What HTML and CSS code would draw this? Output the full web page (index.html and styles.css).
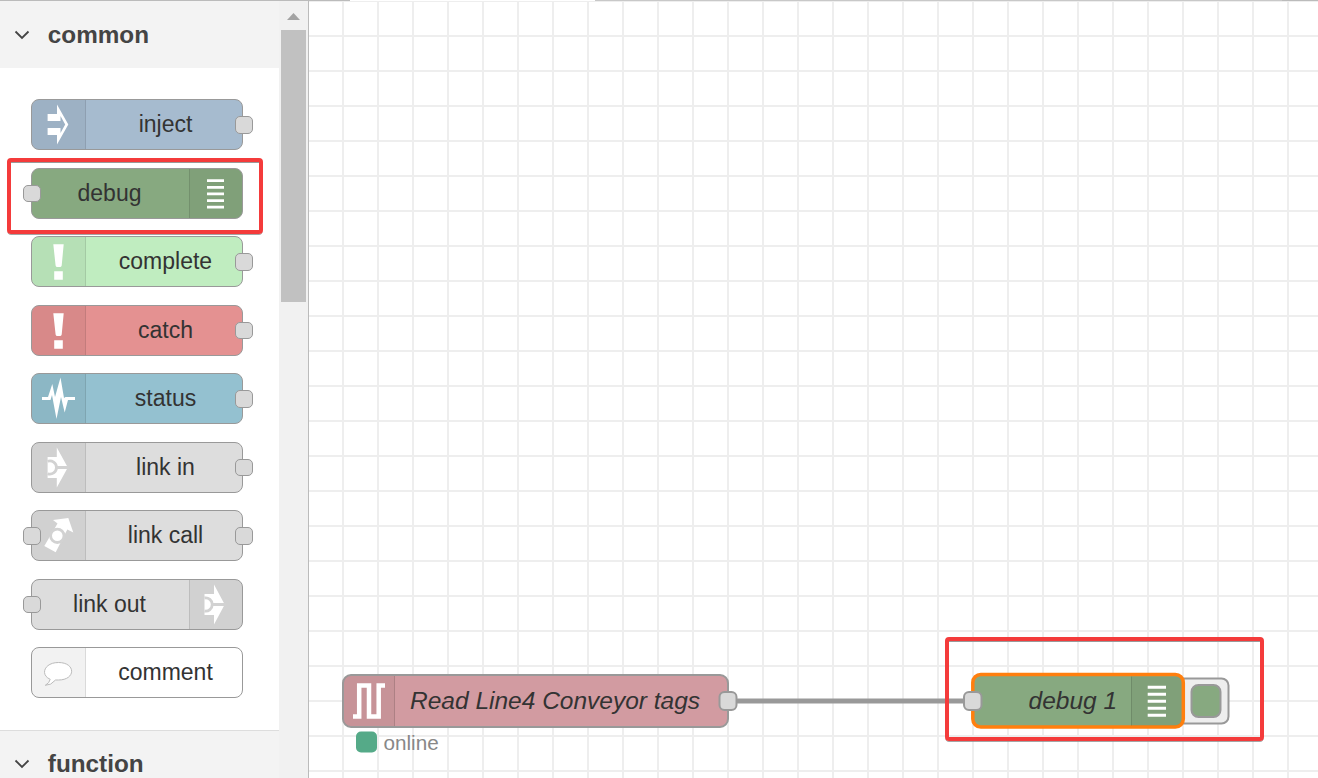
FILE: index.html
```html
<!DOCTYPE html>
<html lang="en">
<head>
<meta charset="utf-8">
<title>Flow editor</title>
<link rel="stylesheet" href="styles.css">
</head>
<body>
<div class="editor">
  <aside class="palette">
    <div class="palette-content">
      <header class="category">
        <svg class="chevron" viewBox="0 0 16 10"><path d="M1.5 1.5 8 8l6.500-6.500"/></svg>
        <h2>common</h2>
      </header>
      <div class="nodes">
        <div class="slot"><div class="node inject"><span class="icon"><svg viewBox="0 0 54 51"><path fill-rule="evenodd" d="M16.600 15H26V5.500L37.300 25.500 26 45.500V36H16.600V29H29.500V34L34.200 25.500 29.500 17V22H16.600Z"/></svg></span><span class="label">inject</span><i class="port out"></i></div></div>
        <div class="slot"><div class="node debug end"><span class="icon"><svg viewBox="0 0 54 51"><path d="M18 11.200h17v2.700H18zM18 18h17v2.700H18zM18 24.500h17v2.700H18zM18 31.200h17v2.700H18zM18 37.800h17v2.700H18z"/></svg></span><span class="label">debug</span><i class="port in short"></i></div></div>
        <div class="slot"><div class="node complete"><span class="icon"><svg viewBox="0 0 54 51"><path d="M22.300 8.300H32.700L30.700 29.500Q30.300 31 29 31H26.300Q24.900 31 24.600 29.500ZM23.200 35.200h8.600v8.500h-8.600z"/></svg></span><span class="label">complete</span><i class="port out"></i></div></div>
        <div class="slot"><div class="node catch"><span class="icon"><svg viewBox="0 0 54 51"><path d="M22.300 8.300H32.700L30.700 29.500Q30.300 31 29 31H26.300Q24.900 31 24.600 29.500ZM23.200 35.200h8.600v8.500h-8.600z"/></svg></span><span class="label">catch</span><i class="port out short"></i></div></div>
        <div class="slot"><div class="node status"><span class="icon"><svg viewBox="0 0 54 51"><path d="M11 24H17L21.300 11 24 24 29.500 4.500 33 25 34.500 24H44V27H37L33.700 39.500 30 24 25.500 46 21 22 19.500 27H11Z"/></svg></span><span class="label">status</span><i class="port out"></i></div></div>
        <div class="slot"><div class="node link"><span class="icon"><svg viewBox="0 0 54 51"><path d="M16.600 15H25.800V5.500L36.800 25.500 25.800 45.500V36H16.600Z"/><path class="ring" d="M16.600 19.300a6.600 6.600 0 1 1 0 12.400M25 25.500H38"/></svg></span><span class="label">link in</span><i class="port out short"></i></div></div>
        <div class="slot"><div class="node link"><span class="icon"><svg viewBox="0 0 54 51"><path d="M13.300 36 24.700 42.200 36.300 19.500 42.300 22.500 37.300 8 22 10 26.500 13.500Z"/><circle class="ring" cx="26.300" cy="25.800" r="6.700"/></svg></span><span class="label">link call</span><i class="port in"></i><i class="port out"></i></div></div>
        <div class="slot"><div class="node link end"><span class="icon"><svg viewBox="0 0 54 51"><path d="M15.500 15H25V5.500L35.700 25.500 25 45.500V36H15.500Z"/><path class="ring" d="M15.500 19a6.600 6.600 0 1 1 0 13M23.500 25.500H37"/></svg></span><span class="label">link out</span><i class="port in short"></i></div></div>
        <div class="slot"><div class="node comment"><span class="icon"><svg viewBox="0 0 54 51"><path class="bubble" d="M14.300 38.300Q18.500 36 19.200 32.300C9 28 13 15.500 27.500 15.500 45 15.500 45 33 27.500 33H24.500Q20 38.500 14.300 38.300Z"/></svg></span><span class="label">comment</span></div></div>
      </div>
      <header class="category second">
        <svg class="chevron" viewBox="0 0 16 10"><path d="M1.500 1.500 8 8l6.500-6.500"/></svg>
        <h2>function</h2>
      </header>
    </div>
    <div class="scrollbar">
      <svg class="arrow" viewBox="0 0 13 7"><path d="M0 7 6.500 0 13 7z"/></svg>
      <div class="thumb"></div>
    </div>
  </aside>
  <main class="workspace">
    <svg class="flow" viewBox="309 0 1009 778">
      <path class="wire" d="M728 701H973"/>
      <g>
        <rect class="body tags" x="343" y="675" width="385" height="52" rx="8"/>
        <path class="shade" d="M395 676V726H351Q344 726 344 719V683Q344 676 351 676Z"/>
        <path class="divider" d="M394.500 676V726"/>
        <path class="square-wave" d="M353 716.500H359.200V685.500H369V716.500H378.700V685.500H385"/>
        <text class="name" x="410" y="708.700">Read Line4 Conveyor tags</text>
        <rect class="plug" x="719.500" y="692" width="17" height="18" rx="5"/>
        <rect class="online" x="356" y="731.500" width="21" height="21" rx="5"/>
        <text class="state" x="383.500" y="750">online</text>
      </g>
      <g>
        <rect class="button" x="1170" y="678.500" width="58.500" height="45" rx="7"/>
        <rect class="toggle" x="1191.500" y="685" width="29" height="32" rx="7"/>
        <rect class="body selected" x="972.800" y="674.500" width="210.500" height="52.500" rx="8"/>
        <path class="shade" d="M1131 676.500H1176Q1181.500 676.500 1181.500 683V719Q1181.500 725.500 1176 725.500H1131Z"/>
        <path class="divider" d="M1131.500 676.500V725.500"/>
        <path class="bars" d="M1147.700 687.300h18.300M1147.700 694.300h18.300M1147.700 701.300h18.300M1147.700 708.300h18.300M1147.700 715.300h18.300"/>
        <text class="name" x="1028.500" y="708.700">debug 1</text>
        <rect class="plug" x="964" y="692" width="17.500" height="18" rx="5"/>
      </g>
    </svg>
  </main>
  <div class="tab-edge"></div>
  <div class="callout callout-palette"></div>
  <div class="callout callout-flow"></div>
</div>
</body>
</html>
```
FILE: styles.css
```css
* { box-sizing: border-box; }
body { margin: 0; font-family: "Liberation Sans", Arial, sans-serif; }
.editor { position: relative; display: flex; width: 1318px; height: 778px; overflow: hidden; background: #fff; }

.palette { display: flex; width: 309px; height: 778px; border-right: 1px solid #bbb; overflow: hidden; }
.palette-content { width: 279px; flex: none; }
.category { display: flex; align-items: center; gap: 17.500px; height: 68px; padding: 1px 0 0 14.300px; background: #f3f3f3; }
.category.second { height: 67px; border-top: 1px solid #ddd; }
.category.second { padding-top: 0; }
.category h2 { margin: 0; font-size: 24.300px; line-height: 28px; color: #444; }
.chevron { width: 16px; height: 10px; fill: none; stroke: #444; stroke-width: 1.800; }

.nodes { height: 662px; padding: 31.400px 0 0 31px; }
.slot { height: 68.500px; }
.node { position: relative; display: flex; width: 212px; height: 51px; border: 1px solid #999; border-radius: 8px; color: #333; }
.node.end { flex-direction: row-reverse; }
.icon { width: 54px; flex: none; background: rgba(0, 0, 0, .05); border-right: 1px solid rgba(0, 0, 0, .1); border-radius: 7px 0 0 7px; }
.end .icon { width: 53px; border-right: 0; border-left: 1px solid rgba(0, 0, 0, .1); border-radius: 0 7px 7px 0; }
.icon svg { display: block; width: 54px; height: 51px; margin: -1px 0 0 -1px; fill: #fff; }
.label { flex: 1; padding-left: 3px; font-size: 23px; line-height: 48px; text-align: center; }
.end .label { padding: 0 2px 0 0; }
.port { position: absolute; top: 16px; width: 18px; height: 18px; border: 1px solid #999; border-radius: 5px; background: #d9d9d9; }
.port.short { height: 17px; }
.port.in { left: -9px; }
.port.out { right: -11px; }
.inject { background: #a6bbcf; }
.debug { background: #87a980; }
.complete { background: #c0edc0; }
.catch { background: #e49191; }
.status { background: #94c1d0; }
.link { background: #ddd; }
.comment { background: #fff; }
.icon .ring { fill: none; stroke: #d2d2d2; stroke-width: 2.800; }
.icon .bubble { stroke: #bbb; stroke-width: 1; }

.scrollbar { display: flex; flex-direction: column; align-items: center; width: 29px; background: #f1f1f1; }
.arrow { width: 13px; height: 7px; margin: 13px 0 10px; fill: #a3a3a3; }
.thumb { width: 25px; height: 272px; background: #c1c1c1; }

.workspace { width: 1009px; height: 778px; background-color: #fff; background-image: linear-gradient(#eee 2px, transparent 2px), linear-gradient(90deg, #eee 2px, transparent 2px); background-size: 35px 35px; background-position: 33px 0; }
.flow { display: block; width: 1009px; height: 778px; }
.wire { stroke: #999; stroke-width: 5; }
.body { stroke: #999; stroke-width: 2; }
.tags { fill: #d29ba1; }
.selected { fill: #87a980; stroke: #ff7f0e; stroke-width: 3.500; }
.shade { fill: #000; fill-opacity: .05; }
.divider { stroke: #000; stroke-opacity: .13; }
.square-wave { fill: none; stroke: #fff; stroke-width: 4.500; }
.bars { stroke: #fff; stroke-width: 3; }
.name { font-size: 24.500px; font-style: italic; fill: #333; }
.plug { fill: #d9d9d9; stroke: #999; stroke-width: 2; }
.online { fill: #5a8; }
.state { font-size: 20.700px; fill: #888; }
.button { fill: #eee; stroke: #999; stroke-width: 2; }
.toggle { fill: #87a980; stroke: #999; stroke-width: 2; }

.tab-edge { position: absolute; top: 0; left: 0; width: 1318px; height: 1px; background: linear-gradient(90deg, #bbb 350px, #fff 350px 595px, #c8c8c8 595px 1282px, #bbb 1282px); }
.callout { position: absolute; border: 4px solid #f43b3b; border-radius: 4px; box-shadow: 0 1px 0 -.300px #888, inset 0 1px 0 #999; }
.callout-palette { left: 7px; top: 158px; width: 256px; height: 76px; }
.callout-flow { left: 945px; top: 637px; width: 319px; height: 104px; }
```
